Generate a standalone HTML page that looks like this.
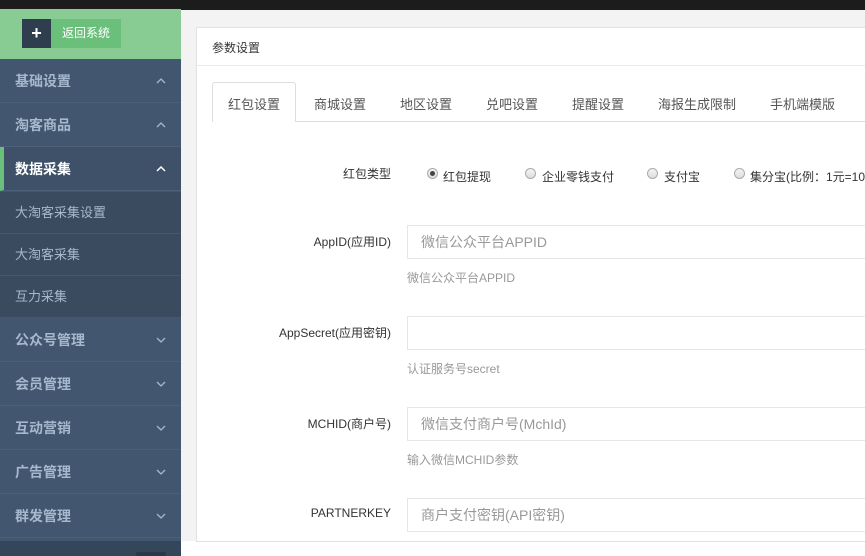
<!DOCTYPE html><html><head><meta charset="utf-8"><style>
*{margin:0;padding:0;box-sizing:border-box}
body{width:865px;height:556px;overflow:hidden;background:#fff;font-family:"Liberation Sans","Noto Sans CJK SC",sans-serif;position:relative}
.a{position:absolute}
.top{left:0;top:0;width:865px;height:10px;background:#1c1c1c}
.sb{left:0;top:9px;width:181px;height:547px;background:#435670}
.gh{left:0;top:9px;width:181px;height:50px;background:#88cb93}
.mi{left:0;width:181px;height:44px;border-bottom:1px solid #4d6079;color:#a6b8cc;font-size:14px;font-weight:bold;line-height:44px;padding-left:15px}
.mi svg{position:absolute;right:15px;top:19px}
.si{left:0;width:181px;height:42px;background:#3a4b60;border-bottom:1px solid #46576c;color:#a6b8cc;font-size:13px;line-height:42px;padding-left:15px}
.lab{width:200px;text-align:right;font-size:12px;color:#333}
.inp{left:407px;width:470px;height:34px;border:1px solid #e5e6e7;font-size:14px;color:#999;line-height:32px;padding-left:13px}
.hint{left:407px;font-size:12px;color:#999}
.rad{width:11px;height:11px;border-radius:50%;border:1px solid #aaa;background:linear-gradient(#f4f4f4,#ddd)}
.rt{font-size:12px;color:#333}
.tab{top:94px;font-size:13px;color:#555}
</style></head><body>
<div class="a" style="left:181px;top:0;width:684px;height:541px;background:#f3f3f4"></div>
<div class="a top"></div>
<div class="a sb"></div>
<div class="a gh"></div>
<div class="a" style="left:22px;top:19px;width:29px;height:29px;background:#2f3e4f;color:#fff;font-size:18px;font-weight:bold;text-align:center;line-height:29px">+</div>
<div class="a" style="left:51px;top:19px;width:70px;height:29px;background:#6abf7a;color:#fff;font-size:12px;text-align:center;line-height:29px">返回系统</div>
<div class="a mi" style="top:59px">基础设置<svg width="10" height="6"><path d="M1 5L5 1L9 5" stroke="#a6b8cc" fill="none" stroke-width="1.3"/></svg></div>
<div class="a mi" style="top:103px">淘客商品<svg width="10" height="6"><path d="M1 5L5 1L9 5" stroke="#a6b8cc" fill="none" stroke-width="1.3"/></svg></div>
<div class="a mi" style="top:147px;color:#fff;background:#3f5169;border-left:4px solid #6abf7a;padding-left:11px">数据采集<svg width="10" height="6"><path d="M1 5L5 1L9 5" stroke="#fff" fill="none" stroke-width="1.5"/></svg></div>
<div class="a si" style="top:192px">大淘客采集设置</div>
<div class="a si" style="top:234px">大淘客采集</div>
<div class="a si" style="top:276px">互力采集</div>
<div class="a mi" style="top:318px">公众号管理<svg width="10" height="6"><path d="M1 1L5 5L9 1" stroke="#a6b8cc" fill="none" stroke-width="1.3"/></svg></div>
<div class="a mi" style="top:362px">会员管理<svg width="10" height="6"><path d="M1 1L5 5L9 1" stroke="#a6b8cc" fill="none" stroke-width="1.3"/></svg></div>
<div class="a mi" style="top:406px">互动营销<svg width="10" height="6"><path d="M1 1L5 5L9 1" stroke="#a6b8cc" fill="none" stroke-width="1.3"/></svg></div>
<div class="a mi" style="top:450px">广告管理<svg width="10" height="6"><path d="M1 1L5 5L9 1" stroke="#a6b8cc" fill="none" stroke-width="1.3"/></svg></div>
<div class="a mi" style="top:494px">群发管理<svg width="10" height="6"><path d="M1 1L5 5L9 1" stroke="#a6b8cc" fill="none" stroke-width="1.3"/></svg></div>
<div class="a" style="left:0;top:541px;width:181px;height:15px;background:#34465a"></div>
<div class="a" style="left:136px;top:552px;width:30px;height:4px;background:#2a3848;border-radius:2px"></div>
<div class="a" style="left:196px;top:27px;width:680px;height:515px;background:#fff;border:1px solid #e2e2e2"></div>
<div class="a" style="left:197px;top:65px;width:668px;height:1px;background:#e7eaec"></div>
<div class="a" style="left:212px;top:39px;font-size:12px;color:#333">参数设置</div>
<div class="a" style="left:212px;top:121px;width:653px;height:1px;background:#ddd"></div>
<div class="a" style="left:212px;top:82px;width:84px;height:40px;border:1px solid #ddd;border-bottom:none;border-radius:3px 3px 0 0;background:#fff"></div>
<div class="a tab" style="left:228px">红包设置</div>
<div class="a tab" style="left:314px">商城设置</div>
<div class="a tab" style="left:400px">地区设置</div>
<div class="a tab" style="left:486px">兑吧设置</div>
<div class="a tab" style="left:572px">提醒设置</div>
<div class="a tab" style="left:658px">海报生成限制</div>
<div class="a tab" style="left:770px">手机端模版</div>
<div class="a lab" style="left:191px;top:165px">红包类型</div>
<div class="a rad" style="left:427px;top:168px"><div style="width:5px;height:5px;background:#444;border-radius:50%;margin:2px"></div></div>
<div class="a rt" style="left:443px;top:168px">红包提现</div>
<div class="a rad" style="left:525px;top:168px"></div>
<div class="a rt" style="left:542px;top:168px">企业零钱支付</div>
<div class="a rad" style="left:647px;top:168px"></div>
<div class="a rt" style="left:664px;top:168px">支付宝</div>
<div class="a rad" style="left:734px;top:168px"></div>
<div class="a rt" style="left:750px;top:168px;white-space:nowrap">集分宝(比例：1元=100</div>
<div class="a lab" style="left:191px;top:233px">AppID(应用ID)</div>
<div class="a inp" style="top:225px">微信公众平台APPID</div>
<div class="a hint" style="top:269px">微信公众平台APPID</div>
<div class="a lab" style="left:191px;top:324px">AppSecret(应用密钥)</div>
<div class="a inp" style="top:316px"></div>
<div class="a hint" style="top:360px">认证服务号secret</div>
<div class="a lab" style="left:191px;top:415px">MCHID(商户号)</div>
<div class="a inp" style="top:407px">微信支付商户号(MchId)</div>
<div class="a hint" style="top:451px">输入微信MCHID参数</div>
<div class="a lab" style="left:191px;top:506px">PARTNERKEY</div>
<div class="a inp" style="top:498px">商户支付密钥(API密钥)</div>
</body></html>
